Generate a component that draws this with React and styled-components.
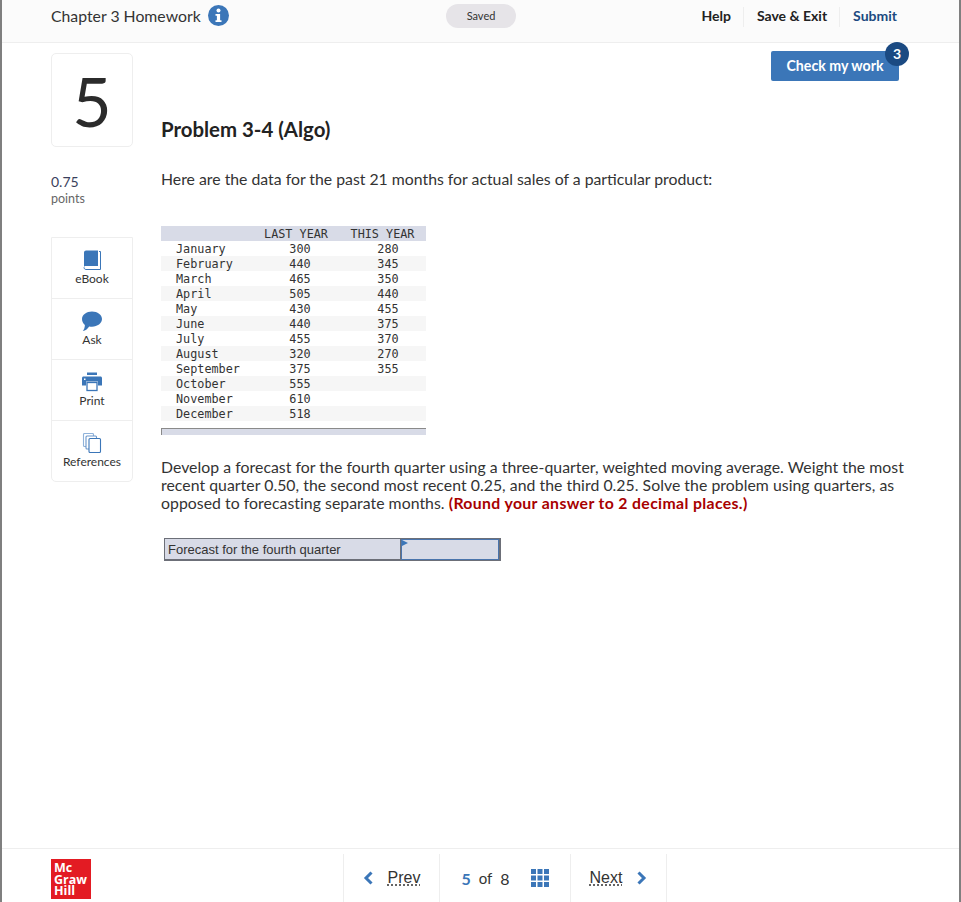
import React from 'react';
import styled, { createGlobalStyle } from 'styled-components';

const GlobalStyle = createGlobalStyle`
  html, body {
    margin: 0;
    padding: 0;
    background: #fff;
    font-family: "Lato", "Liberation Sans", sans-serif;
    color: #2b2b2b;
  }
`;

const Frame = styled.div`
  box-sizing: border-box;
  width: 961px;
  height: 902px;
  border-left: 2px solid #7f7f7f;
  border-right: 2px solid #7f7f7f;
  display: flex;
  flex-direction: column;
  overflow: hidden;
`;

const Header = styled.header`
  box-sizing: border-box;
  height: 43px;
  flex-shrink: 0;
  background: #fbfbfb;
  border-bottom: 1px solid #eeeeee;
  display: grid;
  grid-template-columns: 395px 70px 1fr;
  align-items: start;
  padding-left: 49px;
`;

const HeaderTitle = styled.div`
  display: flex;
  align-items: center;
  gap: 7px;
  height: 31px;
  font-size: 15.8px;
  color: #333;
`;

const SavedPill = styled.div`
  margin-top: 4px;
  height: 24px;
  border-radius: 12px;
  background: #e6e4e8;
  font-size: 11px;
  line-height: 23px;
  text-align: center;
  color: #333;
`;

const HeaderActions = styled.nav`
  display: flex;
  justify-content: flex-end;
  padding-right: 62px;
  margin-top: 7px;
`;

const HeaderLink = styled.a`
  font-size: 14px;
  font-weight: 700;
  line-height: 18px;
  color: ${(p) => (p.$accent ? '#1c4a80' : '#222')};
  padding: 0 ${(p) => (p.$last ? '0' : '12px')} 2px 13px;
  border-left: ${(p) => (p.$first ? 'none' : '1px solid #eeeeee')};
`;

const Main = styled.main`
  flex: 1;
  display: grid;
  grid-template-columns: 82px 1fr;
  column-gap: 28px;
  padding-left: 49px;
  min-height: 0;
`;

const LeftColumn = styled.aside`
  padding-top: 10px;
`;

const NumberCard = styled.div`
  box-sizing: border-box;
  height: 94px;
  border: 1px solid #eeeeee;
  border-radius: 5px;
  display: flex;
  align-items: center;
  justify-content: center;
  font-size: 68px;
  font-weight: 400;
  color: #2b2b2b;
`;

const Points = styled.div`
  margin-top: 26px;
  font-size: 14px;
  line-height: 17px;
  color: #3a3f5c;
`;

const PointsLabel = styled.div`
  margin-top: 1px;
  font-size: 12.5px;
  line-height: 15px;
  color: #666;
`;

const ToolCard = styled.div`
  margin-top: 31px;
  border: 1px solid #eeeeee;
  border-radius: 0 0 5px 5px;
`;

const ToolItem = styled.div`
  box-sizing: border-box;
  height: ${(p) => (p.$first ? '60px' : '61px')};
  display: flex;
  flex-direction: column;
  align-items: center;
  padding-top: 12px;
  gap: 2px;
  font-size: 12px;
  line-height: 14px;
  color: #333;
  border-top: ${(p) => (p.$first ? 'none' : '1px solid #eeeeee')};
  svg {
    display: block;
  }
`;

const Content = styled.section`
  min-width: 0;
`;

const ActionRow = styled.div`
  display: flex;
  justify-content: flex-end;
  padding: 8px 60px 0 0;
`;

const CheckButton = styled.button`
  position: relative;
  width: 128px;
  height: 30px;
  border: none;
  border-radius: 2px;
  background: #3b76b8;
  color: #fff;
  font-family: inherit;
  font-size: 14.2px;
  font-weight: 700;
  padding: 0 0 2px;
`;

const Badge = styled.span`
  position: absolute;
  top: -9px;
  right: -10px;
  width: 24px;
  height: 24px;
  border-radius: 50%;
  background: #1b4a82;
  color: #fff;
  font-size: 14px;
  line-height: 23px;
  text-align: center;
`;

const ProblemTitle = styled.h1`
  margin: 35px 0 0;
  font-size: 20.4px;
  line-height: 26px;
  font-weight: 700;
  color: #222;
`;

const Paragraph = styled.p`
  margin: 0;
  font-size: 15.8px;
  line-height: 18px;
  color: #333;
`;

const Intro = styled(Paragraph)`
  margin-top: 28px;
`;

const Strong = styled.strong`
  color: #a80000;
  letter-spacing: 0.36px;
`;

const DataTable = styled.table`
  margin-top: 38px;
  width: 265px;
  border-collapse: collapse;
  table-layout: fixed;
  font-family: "DejaVu Sans Mono", "Liberation Mono", monospace;
  font-size: 11.8px;
  color: #333;
`;

const HeadRow = styled.tr`
  background: #d8dbe7;
`;

const Row = styled.tr`
  background: ${(p) => (p.$striped ? '#f6f6f6' : '#fff')};
`;

const Cell = styled.td`
  box-sizing: border-box;
  padding: 1px 0 0;
  height: 15px;
  line-height: 14px;
  white-space: pre;
  text-align: center;
`;

const NameCell = styled(Cell)`
  text-align: left;
  padding-left: 15px;
`;

const NumberCell = styled(Cell)`
  padding-left: ${(p) => p.$shift}px;
`;

const FootBar = styled.div`
  box-sizing: border-box;
  margin-top: 7px;
  width: 265px;
  height: 7px;
  background: #d8dbe7;
  border-top: 1px solid #8a8a8a;
  border-left: 1px solid #8a8a8a;
`;

const Question = styled(Paragraph)`
  margin-top: 23px;
  width: 752px;
  letter-spacing: 0.04px;
`;

const AnswerTable = styled.div`
  box-sizing: border-box;
  margin: 26px 0 0 3px;
  width: 337px;
  height: 23px;
  border: 1px solid #6c6f78;
  border-width: 1px 2px 2px 1px;
  background: #d8dbe7;
  display: grid;
  grid-template-columns: 236px 1fr;
`;

const AnswerLabel = styled.div`
  padding-left: 3px;
  font-family: "Liberation Sans", Arial, sans-serif;
  font-size: 13px;
  line-height: 21px;
  color: #333;
  border-right: 1px solid #6c6f78;
`;

const AnswerInput = styled.div`
  position: relative;
  box-sizing: border-box;
  border: 1px solid #4a74ac;
  &::before {
    content: '';
    position: absolute;
    top: 0;
    left: 0;
    border-left: 6px solid #3b76b8;
    border-top: 3px solid transparent;
    border-bottom: 3px solid transparent;
  }
`;

const Footer = styled.footer`
  box-sizing: border-box;
  height: 54px;
  flex-shrink: 0;
  border-top: 1px solid #eeeeee;
  display: flex;
  padding-left: 49px;
`;

const Logo = styled.div`
  box-sizing: border-box;
  width: 40px;
  height: 40px;
  margin-top: 10px;
  padding: 3px 0 0 3px;
  background: #e31b23;
  color: #fff;
  font-family: "Open Sans", sans-serif;
  font-size: 12.5px;
  font-weight: 700;
  line-height: 11.5px;
`;

const Pager = styled.nav`
  margin-left: 252px;
  display: flex;
  height: 100%;
`;

const PagerCell = styled.div`
  box-sizing: border-box;
  width: ${(p) => p.$width}px;
  margin-top: 5px;
  display: flex;
  align-items: center;
  justify-content: center;
  gap: ${(p) => p.$gap || 0}px;
  border-left: 1px solid #eeeeee;
  border-right: ${(p) => (p.$last ? '1px solid #eeeeee' : 'none')};
  font-size: 16px;
  color: #333;
  svg {
    display: block;
  }
`;

const PagerLink = styled.a`
  font-family: "Liberation Sans", Arial, sans-serif;
  font-size: 16px;
  color: #333;
  text-decoration: underline dotted #333;
  text-underline-offset: 2px;
`;

const PageNumber = styled.span`
  color: #3b76b8;
  font-weight: 700;
`;

const PageOf = styled.span`
  margin: 0 8px;
  font-size: 15px;
`;

const PageCount = styled.div`
  display: flex;
  align-items: center;
  margin-right: 21px;
`;

const BLUE = '#3b76b8';

const InfoIcon = () => (
  <svg width="21" height="21" viewBox="0 0 21 21">
    <circle cx="10.5" cy="10.5" r="10.5" fill={BLUE} />
    <circle cx="10.5" cy="5.5" r="2" fill="#fff" />
    <path d="M7.5 9h4.6v6.2h1.4V17H7.5v-1.8h1.4v-4.4H7.5z" fill="#fff" />
  </svg>
);

const BookIcon = () => (
  <svg width="20" height="20" viewBox="0 0 20 20">
    <path d="M2 17.200V2.600C2 1.200 3 .5 4 .5h12v15.500H4c-1.200 0-2 .4-2 1.200z" fill={BLUE} />
    <path d="M17 1.500h1.500v18H4c-1.300 0-2-1-2-2.200" fill="none" stroke={BLUE} strokeWidth="1" />
  </svg>
);

const ChatIcon = () => (
  <svg width="20" height="20" viewBox="0 0 20 20">
    <path d="M10 .5c5.500 0 10 3.200 10 7.600s-4.500 7.600-10 7.600c-1 0-1.900-.1-2.800-.3C5.800 17.500 3.600 19.500.8 20c1.300-1.500 2-3.300 2.100-6C1.100 12.500 0 10.400 0 8.100 0 3.700 4.500.5 10 .5z" fill={BLUE} />
  </svg>
);

const PrintIcon = () => (
  <svg width="20" height="20" viewBox="0 0 20 20">
    <rect x="5" y="0.500" width="10" height="2.500" fill={BLUE} />
    <path d="M1.500 4.500h17c.8 0 1.500.7 1.500 1.500v7.500h-4V9.500H4v4H0V6c0-.8.700-1.500 1.500-1.500z" fill={BLUE} />
    <rect x="2" y="6.500" width="1.500" height="1.500" fill="#fff" />
    <rect x="5" y="10.500" width="10" height="8" fill="#fff" stroke={BLUE} strokeWidth="1.300" />
  </svg>
);

const ReferencesIcon = () => (
  <svg width="20" height="20" viewBox="0 0 20 20" fill="#fff" stroke={BLUE} strokeWidth="1.100">
    <rect x="1.500" y="0.500" width="10" height="13" rx="1" stroke="#8fb2da" />
    <rect x="4" y="3" width="10.500" height="13" rx="1" stroke="#6c97cb" />
    <rect x="7" y="5.500" width="11.500" height="14" rx="1" />
  </svg>
);

const Chevron = ({ flip }) => (
  <svg width="11" height="14" viewBox="0 0 11 14">
    <path d={flip ? 'M2.500 1.500 8 7l-5.500 5.500' : 'M8.500 1.500 3 7l5.500 5.500'} fill="none" stroke={BLUE} strokeWidth="3" />
  </svg>
);

const GridIcon = () => (
  <svg width="18" height="18" viewBox="0 0 18 18" fill={BLUE}>
    {[0, 6.500, 13].map((y) =>
      [0, 6.500, 13].map((x) => <rect key={`${x}-${y}`} x={x} y={y} width="5" height="5" />)
    )}
  </svg>
);

const sales = [
  ['January', '300', '280'],
  ['February', '440', '345'],
  ['March', '465', '350'],
  ['April', '505', '440'],
  ['May', '430', '455'],
  ['June', '440', '375'],
  ['July', '455', '370'],
  ['August', '320', '270'],
  ['September', '375', '355'],
  ['October', '555', ''],
  ['November', '610', ''],
  ['December', '518', ''],
];

const App = () => (
  <>
    <GlobalStyle />
    <Frame>
      <Header>
        <HeaderTitle>
          Chapter 3 Homework
          <InfoIcon />
        </HeaderTitle>
        <SavedPill>Saved</SavedPill>
        <HeaderActions>
          <HeaderLink $first>Help</HeaderLink>
          <HeaderLink>Save &amp; Exit</HeaderLink>
          <HeaderLink $accent $last>Submit</HeaderLink>
        </HeaderActions>
      </Header>

      <Main>
        <LeftColumn>
          <NumberCard>5</NumberCard>
          <Points>
            0.75
            <PointsLabel>points</PointsLabel>
          </Points>
          <ToolCard>
            <ToolItem $first><BookIcon />eBook</ToolItem>
            <ToolItem><ChatIcon />Ask</ToolItem>
            <ToolItem><PrintIcon />Print</ToolItem>
            <ToolItem><ReferencesIcon />References</ToolItem>
          </ToolCard>
        </LeftColumn>

        <Content>
          <ActionRow>
            <CheckButton>
              Check my work
              <Badge>3</Badge>
            </CheckButton>
          </ActionRow>
          <ProblemTitle>Problem 3-4 (Algo)</ProblemTitle>
          <Intro>Here are the data for the past 21 months for actual sales of a particular product:</Intro>
          <DataTable>
            <colgroup>
              <col style={{ width: 92 }} />
              <col style={{ width: 86 }} />
              <col style={{ width: 87 }} />
            </colgroup>
            <tbody>
              <HeadRow>
                <Cell />
                <Cell>LAST YEAR</Cell>
                <Cell>THIS YEAR</Cell>
              </HeadRow>
              {sales.map(([month, last, current], i) => (
                <Row key={month} $striped={i % 2 === 1}>
                  <NameCell>{month}</NameCell>
                  <NumberCell $shift={8}>{last}</NumberCell>
                  <NumberCell $shift={11}>{current}</NumberCell>
                </Row>
              ))}
            </tbody>
          </DataTable>
          <FootBar />
          <Question>
            Develop a forecast for the fourth quarter using a three-quarter, weighted moving average. Weight the most
            recent quarter 0.50, the second most recent 0.25, and the third 0.25. Solve the problem using quarters, as
            opposed to forecasting separate months. <Strong>(Round your answer to 2 decimal places.)</Strong>
          </Question>
          <AnswerTable>
            <AnswerLabel>Forecast for the fourth quarter</AnswerLabel>
            <AnswerInput />
          </AnswerTable>
        </Content>
      </Main>

      <Footer>
        <Logo>Mc<br />Graw<br />Hill</Logo>
        <Pager>
          <PagerCell $width={96} $gap={14}>
            <Chevron />
            <PagerLink>Prev</PagerLink>
          </PagerCell>
          <PagerCell $width={131}>
            <PageCount>
              <PageNumber>5</PageNumber>
              <PageOf>of</PageOf>
              8
            </PageCount>
            <GridIcon />
          </PagerCell>
          <PagerCell $width={97} $gap={14} $last>
            <PagerLink>Next</PagerLink>
            <Chevron flip />
          </PagerCell>
        </Pager>
      </Footer>
    </Frame>
  </>
);

export default App;
